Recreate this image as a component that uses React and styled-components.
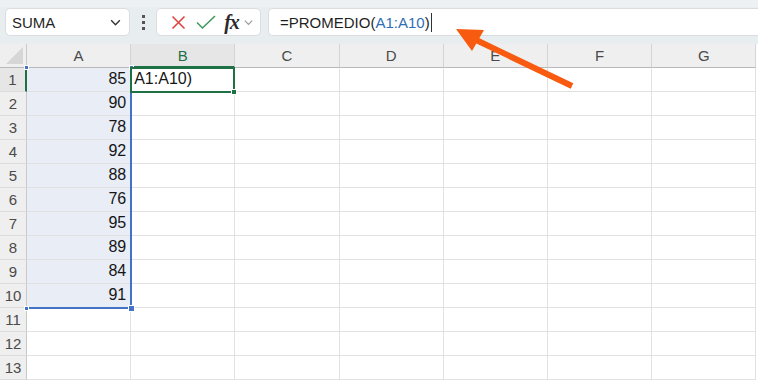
import React from 'react';
import styled, { createGlobalStyle } from 'styled-components';

const GlobalStyle = createGlobalStyle`
  html, body {
    margin: 0;
    padding: 0;
    background: #ffffff;
    overflow: hidden;
  }
  * { box-sizing: border-box; }
`;

const Page = styled.div`
  position: relative;
  width: 758px;
  height: 383px;
  overflow: hidden;
  font-family: "Liberation Sans", Arial, sans-serif;
  color: #222;
`;

const Toolbar = styled.div`
  display: flex;
  align-items: center;
  height: 44px;
  padding: 1px 0 8px 5px;
  background: #e8edf0;
  border-top: 7px solid #edf1f3;
`;

const NameBox = styled.div`
  display: flex;
  align-items: center;
  justify-content: space-between;
  width: 125px;
  height: 28px;
  padding: 0 7px 0 6px;
  background: #ffffff;
  border: 1px solid #d9dde0;
  border-radius: 5px;
  font-size: 15px;
  color: #1f1f1f;
`;

const Dots = styled.div`
  display: flex;
  flex-direction: column;
  gap: 3px;
  margin: 0 11px 0 12px;
  span {
    width: 3px;
    height: 3px;
    background: #555;
  }
`;

const FormulaButtons = styled.div`
  display: flex;
  align-items: center;
  width: 105px;
  height: 28px;
  padding: 0 6px 0 7px;
  background: #ffffff;
  border: 1px solid #d9dde0;
  border-radius: 5px;
`;

const IconSlot = styled.div`
  display: flex;
  align-items: center;
  justify-content: center;
  width: ${p => p.$w}px;
`;

const Fx = styled.span`
  font-family: "Liberation Serif", "Times New Roman", serif;
  font-style: italic;
  font-weight: bold;
  font-size: 20px;
  color: #2b2b2b;
  letter-spacing: -1px;
  line-height: 1;
`;

const FormulaBox = styled.div`
  flex: 1;
  display: flex;
  align-items: center;
  height: 28px;
  margin-left: 7px;
  padding-left: 11px;
  background: #ffffff;
  border: 1px solid #d9dde0;
  border-right: none;
  border-radius: 5px 0 0 5px;
  font-size: 15px;
  color: #1f1f1f;
  white-space: pre;
`;

const RefText = styled.span`
  color: #2e6fb5;
`;

const Caret = styled.span`
  display: inline-block;
  width: 1px;
  height: 19px;
  margin-left: 1px;
  background: #333;
`;

const Sheet = styled.div`
  display: grid;
  grid-template-columns: 27px repeat(7, 104.2px);
  grid-template-rows: repeat(14, 24px);
  background: #ffffff;
`;

const Corner = styled.div`
  grid-column: 1;
  grid-row: 1;
  position: relative;
  background: #efefef;
  border-right: 1px solid #c9c9c9;
  border-bottom: 1px solid #b9b9b9;
  &::after {
    content: "";
    position: absolute;
    right: 3px;
    bottom: 3px;
    width: 0;
    height: 0;
    border-left: 17px solid transparent;
    border-bottom: 17px solid #d6d6d6;
  }
`;

const ColHeader = styled.div`
  grid-row: 1;
  grid-column: ${p => p.$col};
  display: flex;
  align-items: center;
  justify-content: center;
  background: ${p => (p.$active ? '#e6e6e6' : '#efefef')};
  border-right: 1px solid #d4d4d4;
  border-bottom: ${p => (p.$active ? '2px solid #1e7145' : '1px solid #b9b9b9')};
  padding-top: ${p => (p.$active ? '1px' : '0')};
  font-size: 15px;
  color: ${p => (p.$active ? '#1e7145' : '#4a4a4a')};
`;

const RowHeader = styled.div`
  grid-column: 1;
  grid-row: ${p => p.$row};
  display: flex;
  align-items: center;
  justify-content: center;
  background: ${p => (p.$active ? '#e6e6e6' : '#efefef')};
  border-right: ${p => (p.$active ? '2px solid #1e7145' : '1px solid #c9c9c9')};
  border-bottom: 1px solid #dcdcdc;
  font-size: 15px;
  color: #4a4a4a;
`;

const Cell = styled.div`
  grid-row: ${p => p.$row};
  grid-column: ${p => p.$col};
  display: flex;
  align-items: center;
  justify-content: ${p => (p.$num ? 'flex-end' : 'flex-start')};
  padding: 0 4px 1px 3px;
  background: ${p => (p.$inRange ? '#e8edf6' : '#ffffff')};
  border-right: 1px solid #e1e1e1;
  border-bottom: 1px solid #e1e1e1;
  font-size: 16px;
  color: #161616;
  white-space: nowrap;
`;

const RangeBox = styled.div`
  grid-column: 2 / 3;
  grid-row: 2 / 12;
  position: relative;
  z-index: 2;
  pointer-events: none;
  border-right: 2px solid #4472c4;
  border-bottom: 2px solid #4472c4;
  margin: 0 -1px -1px 0;
`;

const Handle = styled.span`
  position: absolute;
  width: ${p => p.$size}px;
  height: ${p => p.$size}px;
  background: ${p => p.$color};
  border: 1px solid #ffffff;
  ${p => p.$pos};
`;

const ActiveBox = styled.div`
  grid-column: 3 / 4;
  grid-row: 2 / 3;
  position: relative;
  z-index: 3;
  pointer-events: none;
  border: 2px solid #1e7145;
  margin: -1px 0 -1px -1px;
`;

const ArrowLayer = styled.svg`
  position: absolute;
  left: 0;
  top: 0;
  pointer-events: none;
  z-index: 10;
`;

const columns = ['A', 'B', 'C', 'D', 'E', 'F', 'G'];
const values = [85, 90, 78, 92, 88, 76, 95, 89, 84, 91];
const rowCount = 13;

const Chevron = ({ color = '#444', size = 12 }) => (
  <svg width={size} height={size} viewBox="0 0 12 12">
    <polyline points="2,4 6,8 10,4" fill="none" stroke={color} strokeWidth="1.3" />
  </svg>
);

const App = () => {
  const rows = Array.from({ length: rowCount }, (_, i) => i + 1);

  return (
    <Page>
      <GlobalStyle />
      <Toolbar>
        <NameBox>
          <span>SUMA</span>
          <Chevron color="#333" size={13} />
        </NameBox>
        <Dots>
          <span />
          <span />
          <span />
        </Dots>
        <FormulaButtons>
          <IconSlot $w={30}>
            <svg width="15" height="15" viewBox="0 0 15 15">
              <path d="M1.5 1.5 L13.5 13.5 M13.5 1.5 L1.5 13.5" stroke="#e0453f" strokeWidth="1.6" fill="none" />
            </svg>
          </IconSlot>
          <IconSlot $w={30}>
            <svg width="20" height="15" viewBox="0 0 20 15">
              <polyline points="1,7.5 6.5,13 19,1" stroke="#3f9a5c" strokeWidth="1.6" fill="none" />
            </svg>
          </IconSlot>
          <IconSlot $w={24}>
            <Fx>fx</Fx>
          </IconSlot>
          <IconSlot $w={12}>
            <Chevron color="#9a9a9a" size={11} />
          </IconSlot>
        </FormulaButtons>
        <FormulaBox>
          =PROMEDIO(<RefText>A1:A10</RefText>)<Caret />
        </FormulaBox>
      </Toolbar>

      <Sheet>
        <Corner />
        {columns.map((c, ci) => (
          <ColHeader key={c} $col={ci + 2} $active={c === 'B'}>{c}</ColHeader>
        ))}
        {rows.map(r => (
          <React.Fragment key={r}>
            <RowHeader $row={r + 1} $active={r === 1}>{r}</RowHeader>
            {columns.map((c, ci) => {
              const inRange = c === 'A' && r <= 10;
              let content = '';
              if (c === 'A' && r <= 10) content = values[r - 1];
              if (c === 'B' && r === 1) content = 'A1:A10)';
              return (
                <Cell key={c} $row={r + 1} $col={ci + 2} $inRange={inRange} $num={c === 'A'}>
                  {content}
                </Cell>
              );
            })}
          </React.Fragment>
        ))}
        <RangeBox>
          <Handle $size={5} $color="#4472c4" $pos="left: -3px; top: -3px;" />
          <Handle $size={5} $color="#4472c4" $pos="right: -4px; top: -3px;" />
          <Handle $size={5} $color="#4472c4" $pos="left: -3px; bottom: -4px;" />
          <Handle $size={7} $color="#4472c4" $pos="right: -5px; bottom: -5px;" />
        </RangeBox>
        <ActiveBox>
          <Handle $size={6} $color="#1e7145" $pos="right: -4px; bottom: -4px;" />
        </ActiveBox>
      </Sheet>

      <ArrowLayer width="758" height="383" viewBox="0 0 758 383">
        <line x1="572" y1="86" x2="474" y2="39" stroke="#f85a10" strokeWidth="6" strokeLinecap="butt" />
        <polygon points="456,29 484,30 472,51" fill="#f85a10" />
      </ArrowLayer>
    </Page>
  );
};

export default App;
